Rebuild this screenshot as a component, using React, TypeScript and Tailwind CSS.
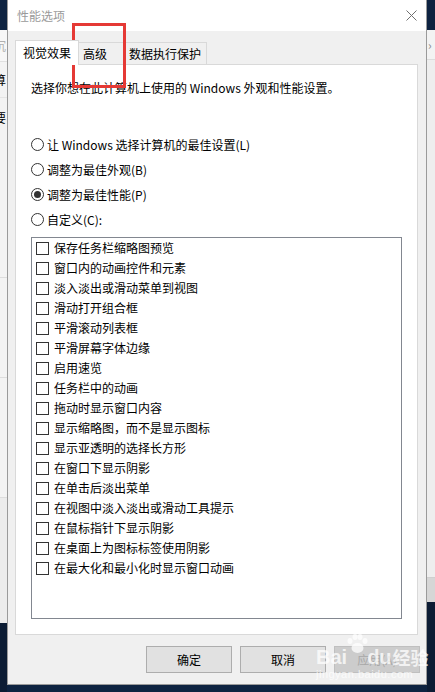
import React from "react";

const checks = [
  "保存任务栏缩略图预览",
  "窗口内的动画控件和元素",
  "淡入淡出或滑动菜单到视图",
  "滑动打开组合框",
  "平滑滚动列表框",
  "平滑屏幕字体边缘",
  "启用速览",
  "任务栏中的动画",
  "拖动时显示窗口内容",
  "显示缩略图，而不是显示图标",
  "显示亚透明的选择长方形",
  "在窗口下显示阴影",
  "在单击后淡出菜单",
  "在视图中淡入淡出或滑动工具提示",
  "在鼠标指针下显示阴影",
  "在桌面上为图标标签使用阴影",
  "在最大化和最小化时显示窗口动画",
];

const radios = [
  { label: "让 Windows 选择计算机的最佳设置(L)", on: false },
  { label: "调整为最佳外观(B)", on: false },
  { label: "调整为最佳性能(P)", on: true },
  { label: "自定义(C):", on: false },
];

export default function App() {
  return (
    <div className="relative flex w-[435px] h-[692px] overflow-hidden bg-[#0e2341] font-['Noto_Sans_CJK_SC','Microsoft_YaHei',sans-serif] text-[12px] leading-[16px] text-black">
      {/* left background window strip */}
      <div className="flex flex-col w-[7px] h-full">
        <div className="h-[30px] bg-[#0e2341]" />
        <div className="flex flex-col h-[593px] bg-[#f3f3f3] overflow-hidden">
          <div className="h-[32px] bg-[#f7f7f7] border-b border-[#e0e0e0] flex items-center">
            <span className="ml-[-6px] text-[#b0b0b0]">沉</span>
          </div>
          <div className="h-[36px] border-b border-[#e5e5e5] flex items-center">
            <span className="ml-[-6px]">算</span>
          </div>
          <div className="h-[40px] flex items-center">
            <span className="ml-[-6px]">要</span>
          </div>
          <div className="h-[140px] border-b border-[#dddddd]" />
          <div className="h-[100px] border-b border-[#dddddd]" />
          <div className="h-[120px] border-b border-[#dddddd]" />
          <div className="flex-1 bg-[#ececec]" />
        </div>
        <div className="flex-1 bg-[#0c1c34]" />
      </div>

      {/* dialog */}
      <div className="flex flex-col w-[420px] h-[685px] border-l border-r border-b border-[#9a9a9a] bg-[#f0f0f0]">
        {/* title bar */}
        <div className="flex items-center justify-between h-[31px] bg-white pl-[9px] pr-[9px]">
          <span className="text-[#9a9a9a]">性能选项</span>
          <svg width="11" height="11" viewBox="0 0 11 11">
            <path d="M0.5 0.5 L10.5 10.5 M10.5 0.5 L0.5 10.5" stroke="#6f6f6f" strokeWidth="1" fill="none" />
          </svg>
        </div>

        {/* body */}
        <div className="flex flex-col pl-[7px] pr-[8px] pt-[9px]">
          {/* tabs */}
          <div className="flex items-end h-[24px]">
            <div className="relative z-10 flex items-center justify-center w-[64px] h-[25px] mb-[-1px] bg-white border-l border-t border-r border-[#d9d9d9]">
              视觉效果
            </div>
            <div className="flex items-center w-[45px] h-[22px] pl-[4px] bg-[#f0f0f0] border-t border-r border-[#d9d9d9]">
              高级
            </div>
            <div className="flex items-center justify-center w-[83px] h-[22px] bg-[#f0f0f0] border-t border-r border-[#d9d9d9]">
              数据执行保护
            </div>
          </div>

          {/* panel */}
          <div className="flex flex-col h-[571px] bg-white border border-[#d9d9d9] pt-[15px] px-[15px]">
            <div>选择你想在此计算机上使用的 Windows 外观和性能设置。</div>

            <div className="flex flex-col mt-[36px]">
              {radios.map((r) => (
                <div key={r.label} className="flex items-center h-[25px]">
                  <span className="flex items-center justify-center w-[13px] h-[13px] rounded-full border border-[#333333] bg-white">
                    {r.on && <span className="w-[7px] h-[7px] rounded-full bg-[#333333]" />}
                  </span>
                  <span className="ml-[3px]">{r.label}</span>
                </div>
              ))}
            </div>

            <div className="flex flex-col mt-[5px] h-[382px] border border-[#828790] pl-[4px]">
              {checks.map((c) => (
                <div key={c} className="flex items-center h-[20px]">
                  <span className="w-[13px] h-[13px] border border-[#333333] bg-white" />
                  <span className="ml-[5px]">{c}</span>
                </div>
              ))}
            </div>
          </div>

          {/* buttons */}
          <div className="flex justify-end gap-[8px] mt-[11px] mr-[-2px]">
            <div className="flex items-center justify-center w-[86px] h-[27px] bg-[#e1e1e1] border border-[#adadad]">
              确定
            </div>
            <div className="flex items-center justify-center w-[86px] h-[27px] bg-[#e1e1e1] border border-[#adadad]">
              取消
            </div>
            <div className="flex items-center justify-center w-[86px] h-[27px] bg-[#cccccc] border border-[#bfbfbf] text-[#a8a8a8]">
              应用(A)
            </div>
          </div>
        </div>
      </div>

      {/* right background window strip */}
      <div className="flex flex-col w-[8px] h-full">
        <div className="h-[30px] bg-[#0e2341]" />
        <div className="h-[30px] bg-[#f3f3f3] border-b border-[#dcdcdc] flex items-center overflow-hidden">
          <span className="ml-[1px] text-[#8a8a8a]">›</span>
        </div>
        <div className="h-[518px] bg-[#eeeeee] border-b border-[#cfcfcf]" />
        <div className="h-[24px] bg-[#d6d6d6]" />
        <div className="flex-1 bg-[#0c1c34]" />
      </div>

      {/* red annotation box */}
      <div className="absolute left-[72px] top-[23px] w-[54px] h-[65px] border-[3px] border-[#e53935]" />

      {/* watermark */}
      <div className="absolute left-[316px] top-[634px] flex flex-col items-start text-white/75 pointer-events-none">
        <div className="relative flex items-end h-[34px]">
          <span className="font-['Liberation_Sans',sans-serif] text-[20px] leading-[22px] font-bold">Bai</span>
          <svg className="absolute left-[30px] top-[0px]" width="22" height="20" viewBox="0 0 22 20">
            <g fill="rgba(255,255,255,0.75)">
              <ellipse cx="4" cy="7" rx="2.5" ry="3" />
              <ellipse cx="9" cy="3" rx="2.5" ry="3" />
              <ellipse cx="14" cy="3" rx="2.5" ry="3" />
              <ellipse cx="19" cy="7" rx="2.5" ry="3" />
              <ellipse cx="11.5" cy="14" rx="6" ry="5" />
            </g>
          </svg>
          <span className="ml-[20px] font-['Liberation_Sans',sans-serif] text-[20px] leading-[22px] font-bold">du</span>
          <span className="ml-[1px] text-[18px] leading-[22px] font-bold">经验</span>
        </div>
        <span className="font-['Liberation_Sans',sans-serif] text-[11px] leading-[12px] tracking-[0.5px]">jingyan.baidu.com</span>
      </div>
    </div>
  );
}
